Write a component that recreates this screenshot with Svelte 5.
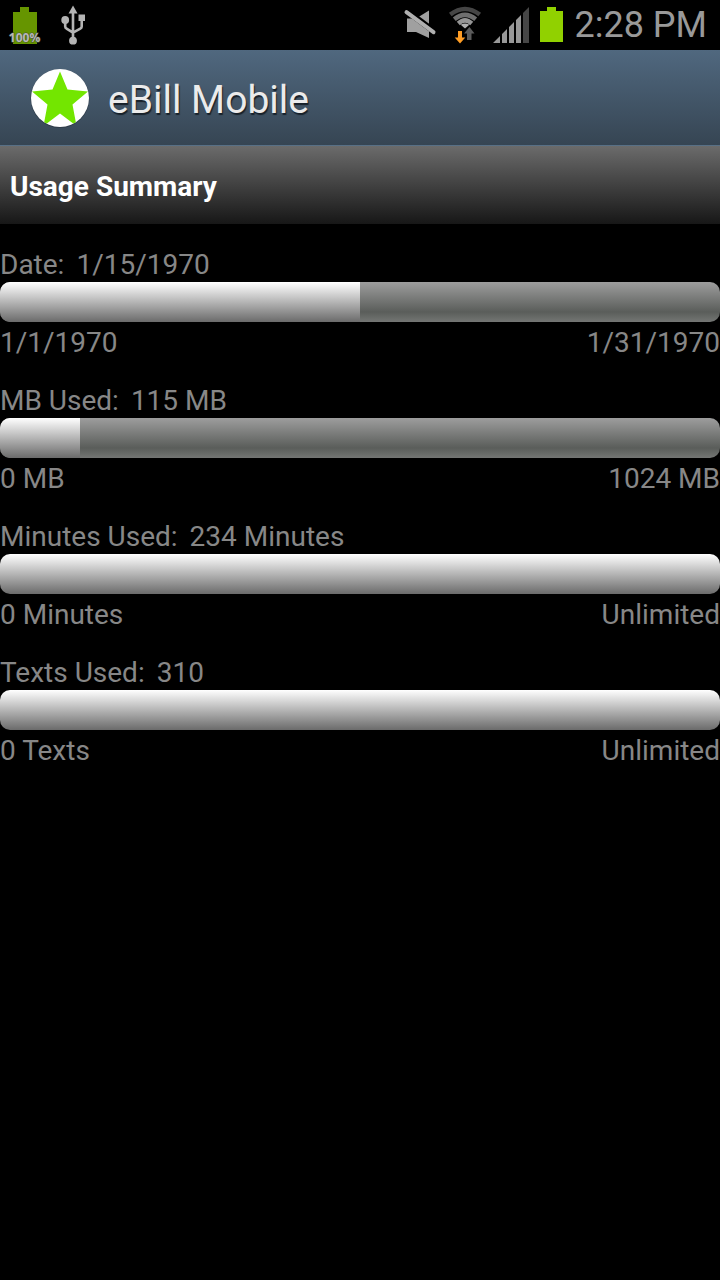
<script>
  const meters = [
    { id: 'date', label: 'Date:', current: '1/15/1970', min: '1/1/1970', max: '1/31/1970', value: 15, total: 30 },
    { id: 'data', label: 'MB Used:', current: '115 MB', min: '0 MB', max: '1024 MB', value: 114, total: 1024 },
    { id: 'minutes', label: 'Minutes Used:', current: '234 Minutes', min: '0 Minutes', max: 'Unlimited', value: 1, total: 1 },
    { id: 'texts', label: 'Texts Used:', current: '310', min: '0 Texts', max: 'Unlimited', value: 1, total: 1 }
  ];
</script>

<div class="screen">
  <div class="status">
    <div class="group left">
      <svg width="34" height="50" viewBox="8 0 34 50" aria-label="Battery 100%">
        <path d="M13 12h7V7h9v5h8v32H13z" fill="#669500" />
        <text class="percent" x="24.500" y="42" text-anchor="middle">100%</text>
      </svg>
      <svg width="26" height="50" viewBox="60 0 26 50" aria-label="USB connected">
        <g fill="#b4b4b4">
          <path d="M73 5.500l4.500 8h-9z" />
          <circle cx="65.200" cy="20" r="3.900" />
          <path d="M78.500 14.500h6.500v6.500h-6.500z" />
          <circle cx="73" cy="40.700" r="3.900" />
        </g>
        <path d="M73 12v28M65.200 20v6.500q0 1.500 1.400 2.200l6.400 4M81.700 20v6.500q0 1.500-1.400 2.200L73 32.700" fill="none" stroke="#b4b4b4" stroke-width="2.600" />
      </svg>
    </div>
    <div class="group right">
      <svg width="34" height="50" viewBox="401 0 34 50" aria-label="Sound off">
        <path d="M405 18.500h9L427 10.500V38l-13-6H405z" fill="#a0a0a0" />
        <path d="M403 9.500L435 33.500" stroke="#000" stroke-width="6" />
        <path d="M404.500 12.200L431.500 32.200" stroke="#b0b0b0" stroke-width="4" stroke-linecap="round" />
      </svg>
      <svg width="34" height="50" viewBox="449 0 34 50" aria-label="Wi-Fi">
        <g fill="none" stroke-width="4.500">
          <path d="M451.300 14.500Q466 3.500 480.700 14.500" stroke="#454545" />
          <path d="M455.300 19.300Q466 10.300 476.700 19.300" stroke="#6e6e6e" />
          <path d="M459.300 23.500Q466 17.300 472.700 23.500" stroke="#959595" />
        </g>
        <path d="M461.700 24.800q4.300-2.500 8.600 0L466 28.500z" fill="#b0b0b0" />
        <path d="M470.500 27l5 6.500h-3v6.500h-4.500v-6.500H465z" fill="#5b5b5b" />
        <path d="M459 31h4v6.500h3.300l-5.300 6-5.300-6h3.300z" fill="#ff9d24" />
      </svg>
      <svg width="36" height="50" viewBox="493 0 36 50" aria-label="Signal strength">
        <path d="M493 43l7-7v7zM502 43v-9l5-5v14zM509 43V27l5-5v21zM516 43V20l5-5v28z" fill="#989898" />
        <path d="M523 43V13l6-6v36z" fill="#464646" />
      </svg>
      <svg width="24" height="50" viewBox="540 0 24 50" aria-label="Battery full">
        <path d="M540 11h7V7h9v4h7v31h-23z" fill="#91d100" />
      </svg>
      <time>2:28 PM</time>
    </div>
  </div>

  <header>
    <svg width="60" height="60" viewBox="0 0 60 60" aria-hidden="true">
      <defs><clipPath id="disc"><circle cx="30" cy="30" r="29" /></clipPath></defs>
      <circle cx="30" cy="30.500" r="29.500" fill="#26323d" opacity=".6" />
      <circle cx="30" cy="30" r="29" fill="#fff" />
      <path clip-path="url(#disc)" d="M30 3.500l7.500 18 20.500 2-15.500 13 4 21.500L30 45.500 13.500 58l4-21.500L2 23.500l20.500-2z" fill="#73e600" />
    </svg>
    <h1>eBill Mobile</h1>
  </header>

  <main>
    <h2>Usage Summary</h2>
    <div class="meters">
      {#each meters as m (m.id)}
        <section>
          <label for={m.id}><span>{m.label}</span><span>{m.current}</span></label>
          <progress id={m.id} value={m.value} max={m.total}></progress>
          <div class="range"><span>{m.min}</span><span>{m.max}</span></div>
        </section>
      {/each}
    </div>
  </main>
</div>

<style>
  :global(body) {
    margin: 0;
    background: #000;
  }
  .screen {
    min-height: 100vh;
    background: #000;
    color: #878787;
    font-family: Roboto, "Noto Sans", sans-serif;
    font-size: 28px;
    line-height: 34px;
  }
  svg {
    display: block;
    flex: none;
  }
  .status {
    display: flex;
    justify-content: space-between;
    height: 50px;
    padding: 0 13px 0 8px;
  }
  .group {
    display: flex;
    align-items: center;
  }
  .left {
    gap: 18px;
  }
  .right {
    gap: 11px;
  }
  .percent {
    font: bold 12px "Open Sans", sans-serif;
    fill: #b8b8b8;
    stroke: #454d36;
    stroke-width: 1px;
    paint-order: stroke;
  }
  time {
    color: #999;
    font-size: 36px;
    line-height: 50px;
  }
  header {
    display: flex;
    align-items: center;
    gap: 18px;
    height: 95px;
    padding: 0 30px;
    border-bottom: 1px solid #587086;
    background: linear-gradient(#50687f, #364553);
  }
  h1 {
    margin: 4px 0 0;
    color: #ebebeb;
    font-size: 39px;
    font-weight: 400;
    line-height: 48px;
    text-shadow: 1px 2px 1px #18212a;
  }
  h2 {
    margin: 0;
    padding: 22px 10px 18px;
    background: linear-gradient(#6b6b6b, #171717);
    color: #fff;
    font-size: 28px;
    font-weight: 700;
    line-height: 38px;
  }
  .meters {
    display: flex;
    flex-direction: column;
    gap: 20px;
    padding: 20px 0;
  }
  label {
    display: flex;
    gap: 12px;
    padding-top: 4px;
  }
  progress {
    display: block;
    width: 100%;
    height: 40px;
    border: 0;
    border-radius: 10px;
    overflow: hidden;
    appearance: none;
    background: #000;
  }
  progress::-webkit-progress-bar {
    background: linear-gradient(#9d9d9d, #5a5d5a 75%, #747674);
  }
  progress::-webkit-progress-value {
    background: linear-gradient(#fff, #b5b5b5 50%, #6b6b6b);
  }
  .range {
    display: flex;
    justify-content: space-between;
    padding-top: 4px;
  }
</style>
